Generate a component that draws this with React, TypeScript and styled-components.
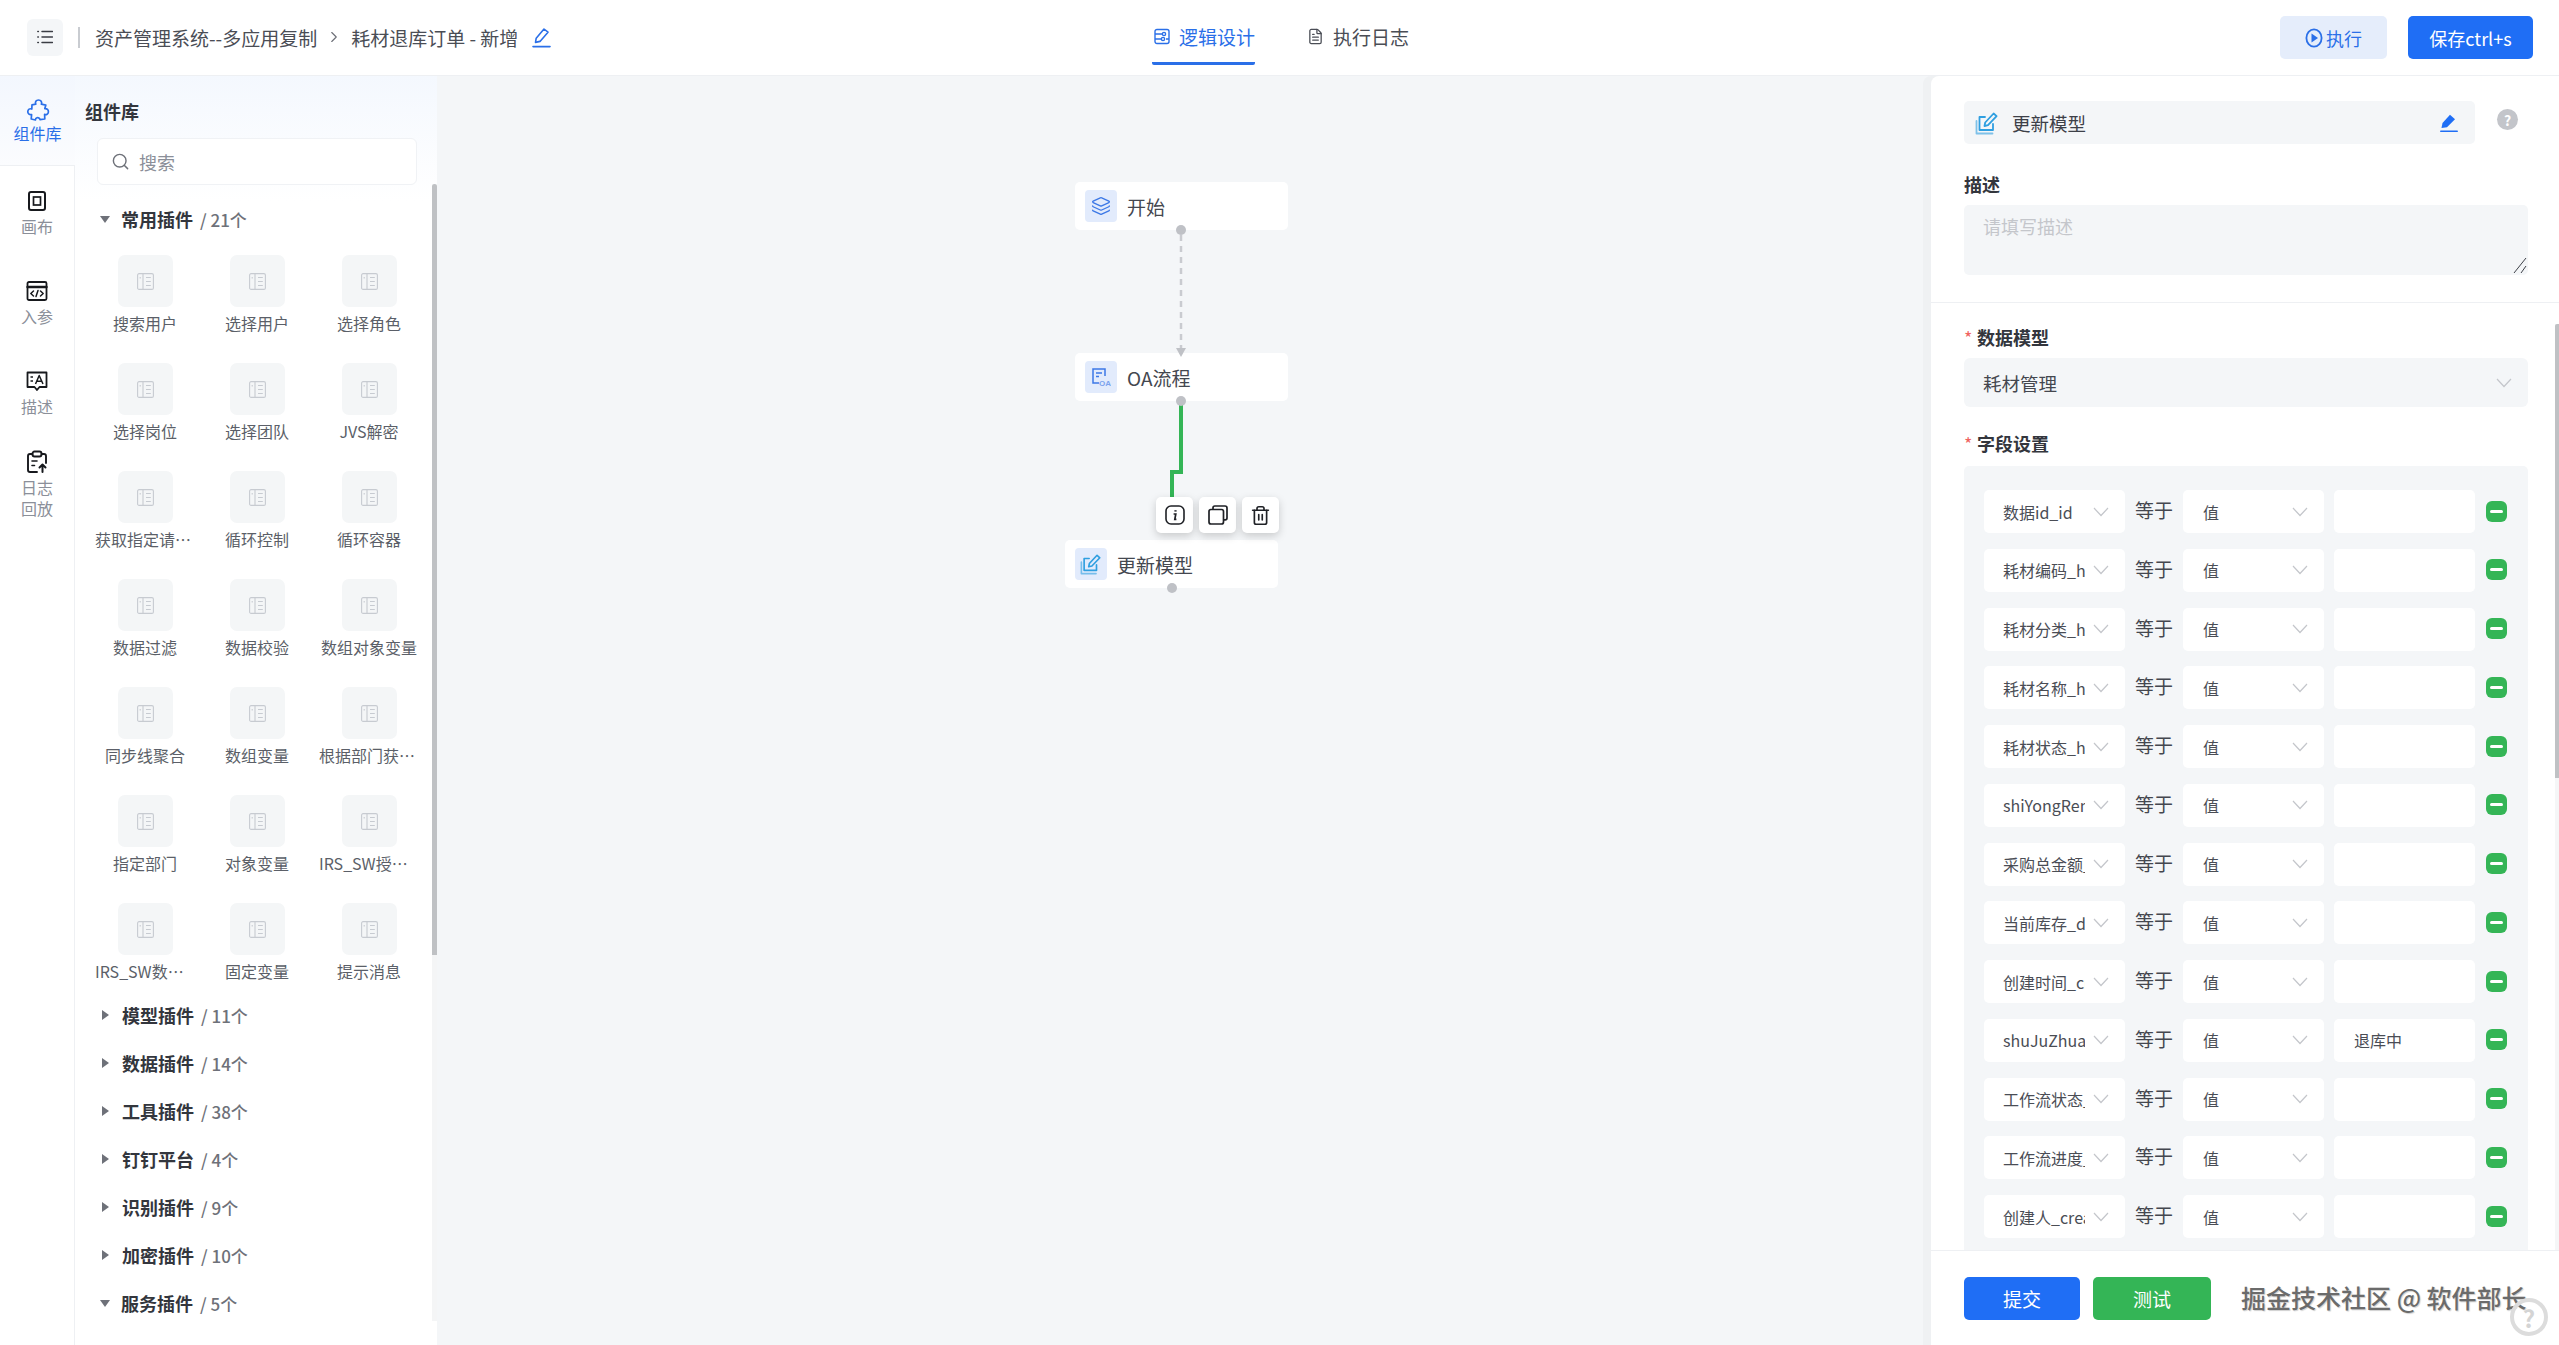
import styled, { createGlobalStyle } from "styled-components";
import { ChevronRight, Search, Layers, Trash2, FileText } from "lucide-react";

const GlobalStyle = createGlobalStyle`
  html, body {
    margin: 0;
    padding: 0;
    height: 100%;
    background: #fff;
  }
  body {
    font-family: "Noto Sans CJK SC", "Noto Sans", sans-serif;
    color: #3d4048;
    overflow: hidden;
  }
  * { box-sizing: border-box; }
`;

const Page = styled.div`
  width: 2559px;
  height: 1345px;
  display: flex;
  flex-direction: column;
  overflow: hidden;
`;

const Header = styled.header`
  height: 76px;
  flex: none;
  display: flex;
  align-items: center;
  justify-content: space-between;
  position: relative;
  padding: 0 26px 1px 27px;
  border-bottom: 1px solid #eef0f3;
  background: #fff;
`;

const HeaderLeft = styled.div`
  display: flex;
  align-items: center;
  font-size: 19px;
`;

const MenuButton = styled.div`
  width: 36px;
  height: 37px;
  border-radius: 6px;
  background: #f4f6f8;
  display: flex;
  align-items: center;
  justify-content: center;
  margin-right: 15px;
`;

const Divider = styled.div`
  width: 2px;
  height: 21px;
  background: #c9ccd1;
  margin-right: 15px;
`;

const Crumb = styled.span`
  color: #4a4d55;
  white-space: nowrap;
`;

const CrumbSep = styled(ChevronRight)`
  margin: 0 8px 0 8px;
  color: #6b6e76;
`;

const CrumbEdit = styled.span`
  display: flex;
  margin-left: 14px;
`;

const Tabs = styled.div`
  position: absolute;
  left: 1152px;
  top: 0;
  height: 75px;
  display: flex;
  gap: 50px;
`;

const Tab = styled.div<{ $active?: boolean }>`
  height: 65px;
  display: flex;
  align-items: center;
  gap: 9px;
  padding: 10px 0 0 2px;
  font-size: 19px;
  color: ${(p) => (p.$active ? "#2a6fe8" : "#4a4d55")};
  border-bottom: 3px solid ${(p) => (p.$active ? "#2a6fe8" : "transparent")};
  border-radius: 0 0 2px 2px;
`;

const HeaderActions = styled.div`
  display: flex;
  gap: 21px;
`;

const HeaderButton = styled.button<{ $primary?: boolean }>`
  height: 43px;
  width: ${(p) => (p.$primary ? "125px" : "107px")};
  margin-top: 1px;
  border: none;
  border-radius: 5px;
  font: inherit;
  font-size: 18px;
  display: flex;
  align-items: center;
  justify-content: center;
  gap: 3px;
  color: ${(p) => (p.$primary ? "#fff" : "#2a6fe8")};
  background: ${(p) => (p.$primary ? "#1f6ef5" : "#e5edfb")};
`;

const Body = styled.div`
  flex: 1;
  min-height: 0;
  display: flex;
  background: #f4f6f8;
`;

const Rail = styled.nav`
  width: 75px;
  flex: none;
  background: #fff;
  border-right: 1px solid #eef0f3;
  display: flex;
  flex-direction: column;
  align-items: stretch;
`;

const RailActive = styled.div`
  height: 90px;
  margin-right: -1px;
  padding-top: 22px;
  display: flex;
  flex-direction: column;
  align-items: center;
  background: linear-gradient(#f3f7fe, #fbfcfe);
  border-bottom: 1px solid #eef0f3;
  color: #2a6fe8;
  font-size: 16px;
  line-height: 22px;
`;

const RailList = styled.div`
  padding-top: 23px;
  display: flex;
  flex-direction: column;
  gap: 42px;
`;

const RailItem = styled.div<{ $tight?: boolean }>`
  display: flex;
  flex-direction: column;
  align-items: center;
  text-align: center;
  color: #8b8f99;
  font-size: 16px;
  line-height: 21px;
  width: 74px;
  margin-top: ${(p) => (p.$tight ? "-9px" : "0")};

  svg { margin-bottom: 3px; color: #17191d; }
`;

const Panel = styled.aside`
  width: 362px;
  flex: none;
  position: relative;
  background: linear-gradient(#f4f8fe, #fff 125px);
  padding: 22px 0 0 10px;
  overflow: hidden;
`;

const PanelTitle = styled.div`
  font-size: 18px;
  font-weight: 700;
  line-height: 26px;
  color: #33363d;
`;

const SearchBox = styled.div`
  width: 320px;
  height: 47px;
  margin: 14px 0 0 12px;
  border: 1px solid #f0f2f5;
  border-radius: 6px;
  background: #fff;
  display: flex;
  align-items: center;
  gap: 9px;
  padding-left: 13px;
  font-size: 18px;
  color: #8b8f99;
`;

const ScrollThumb = styled.div`
  position: absolute;
  right: 0;
  top: 108px;
  width: 5px;
  height: 771px;
  border-radius: 3px 3px 0 0;
  background: #bfc1c4;
`;

const ScrollTrack = styled.div`
  position: absolute;
  right: 0;
  top: 108px;
  bottom: 24px;
  width: 5px;
  background: #f4f5f6;
`;

const GroupHeader = styled.div`
  height: 48px;
  display: flex;
  align-items: center;
  padding-left: 15px;
  font-size: 18px;
`;

const FirstGroup = styled(GroupHeader)`
  margin-top: 10px;
`;

const Caret = styled.span<{ $open?: boolean }>`
  width: 0;
  height: 0;
  margin-right: ${(p) => (p.$open ? "11px" : "13px")};
  margin-left: ${(p) => (p.$open ? "0" : "2px")};
  border-style: solid;
  ${(p) =>
    p.$open
      ? "border-width: 7px 5px 0 5px; border-color: #6e7179 transparent transparent transparent;"
      : "border-width: 5px 0 5px 7px; border-color: transparent transparent transparent #6e7179;"}
`;

const GroupName = styled.span`
  font-weight: 700;
  color: #33363d;
`;

const GroupCount = styled.span`
  margin-left: 7px;
  color: #6e7179;
  font-weight: 500;
  font-size: 17px;
`;

const Tiles = styled.div`
  width: 336px;
  margin: 12px 0 0 4px;
  display: grid;
  grid-template-columns: repeat(3, 112px);
  grid-auto-rows: 108px;
`;

const Tile = styled.div`
  display: flex;
  flex-direction: column;
  align-items: center;
  min-width: 0;
`;

const TileIcon = styled.div`
  width: 55px;
  height: 52px;
  border-radius: 7px;
  background: #f4f6f7;
  display: flex;
  align-items: center;
  justify-content: center;
`;

const TileLabel = styled.div<{ $wide?: boolean }>`
  width: 100%;
  padding: 0 ${(p) => (p.$wide ? "0" : "6px")};
  margin-top: 4px;
  text-align: center;
  font-size: 16px;
  line-height: 24px;
  color: #5b5f68;
  white-space: nowrap;
  overflow: hidden;
  text-overflow: ellipsis;
`;

const GroupStack = styled.div`
  margin-top: -20px;
`;

const Canvas = styled.main`
  flex: 1;
  position: relative;
  min-width: 0;
`;

const Node = styled.div<{ $x: number; $y: number }>`
  position: absolute;
  left: ${(p) => p.$x}px;
  top: ${(p) => p.$y}px;
  width: 213px;
  height: 48px;
  border-radius: 5px;
  background: #fff;
  display: flex;
  align-items: center;
  gap: 10px;
  padding-left: 10px;
  font-size: 19px;
  color: #44474f;
`;

const NodeIcon = styled.div`
  width: 32px;
  height: 32px;
  border-radius: 4px;
  background: #e2ebfc;
  display: flex;
  align-items: center;
  justify-content: center;
`;

const Links = styled.svg`
  position: absolute;
  left: 0;
  top: 0;
  width: 900px;
  height: 600px;
  pointer-events: none;
`;

const NodeActions = styled.div`
  position: absolute;
  left: 719px;
  top: 421px;
  display: flex;
  gap: 6px;
`;

const ActionButton = styled.div`
  width: 37px;
  height: 36px;
  border-radius: 5px;
  background: #fff;
  box-shadow: 0 3px 8px rgba(0, 0, 0, 0.18);
  display: flex;
  align-items: center;
  justify-content: center;
  color: #1f2126;
`;

const Inspector = styled.section`
  width: 628px;
  flex: none;
  position: relative;
  background: #fff;
  border-radius: 8px 0 0 0;
  box-shadow: -8px 0 0 #eff1f3;
  display: flex;
  flex-direction: column;
  overflow: hidden;
`;

const InspectorTop = styled.div`
  height: 227px;
  flex: none;
  padding: 25px 31px 0 33px;
  border-bottom: 1px solid #eef0f3;
`;

const TitleRow = styled.div`
  display: flex;
  align-items: center;
  gap: 22px;
`;

const TitleBar = styled.div`
  width: 511px;
  height: 43px;
  border-radius: 5px;
  background: #f4f6f8;
  display: flex;
  align-items: center;
  gap: 13px;
  padding: 0 17px 0 11px;
  font-size: 18.5px;
  color: #3d4048;
`;

const TitleText = styled.span`
  flex: 1;
`;

const HelpDot = styled.div`
  width: 21px;
  height: 21px;
  margin-top: -6px;
  border-radius: 50%;
  background: #c3c5ca;
  color: #fff;
  font-size: 14px;
  font-weight: 700;
  display: flex;
  align-items: center;
  justify-content: center;
`;

const Label = styled.div`
  font-size: 18px;
  font-weight: 700;
  line-height: 26px;
  color: #33363d;
  display: flex;
`;

const DescLabel = styled(Label)`
  margin-top: 27px;
`;

const TextArea = styled.div`
  position: relative;
  width: 564px;
  height: 70px;
  margin-top: 8px;
  border-radius: 5px;
  background: #f4f6f8;
  padding: 7px 19px;
  font-size: 18px;
  line-height: 28px;
  color: #c4c6cb;
`;

const ResizeMark = styled.svg`
  position: absolute;
  right: 1px;
  bottom: 1px;
`;

const Form = styled.div`
  flex: 1;
  min-height: 0;
  padding: 21px 31px 0 33px;
  overflow: hidden;
  position: relative;
`;

const Star = styled.span`
  color: #f0645f;
  width: 13px;
  font-weight: 400;
`;

const ModelSelect = styled.div`
  width: 564px;
  height: 49px;
  margin: 8px 0 23px;
  border-radius: 6px;
  background: #f4f6f8;
  display: flex;
  align-items: center;
  justify-content: space-between;
  padding: 0 16px 0 19px;
  font-size: 18.5px;
  color: #44474f;
`;

const FieldGroup = styled.div`
  width: 564px;
  margin-top: 10px;
  padding: 24px 21px 40px 20px;
  border-radius: 5px;
  background: #f4f6f8;
  display: flex;
  flex-direction: column;
  gap: 15.75px;
`;

const FieldRow = styled.div`
  height: 43px;
  flex: none;
  display: flex;
  align-items: center;
`;

const FieldSelect = styled.div`
  width: 141px;
  height: 43px;
  flex: none;
  border-radius: 5px;
  background: #fff;
  display: flex;
  align-items: center;
  padding-left: 19px;
  font-size: 16px;
  color: #4a4d55;
`;

const FieldText = styled.span`
  width: 82px;
  margin-right: 8px;
  overflow: hidden;
  white-space: nowrap;
`;

const ValueText = styled(FieldText)`
  width: 82px;
  padding-left: 1px;
`;

const Chevron = styled.svg`
  flex: none;
`;

const Op = styled.div`
  width: 58px;
  flex: none;
  text-align: center;
  font-size: 19px;
  margin-top: -4px;
  color: #44474f;
`;

const ValueInput = styled.div`
  width: 141px;
  height: 43px;
  flex: none;
  margin-left: 10px;
  border-radius: 5px;
  background: #fff;
  display: flex;
  align-items: center;
  padding-left: 20px;
  font-size: 16px;
  color: #4a4d55;
`;

const MinusButton = styled.div`
  width: 21px;
  height: 21px;
  flex: none;
  margin: -1px 0 0 11px;
  border-radius: 6px;
  background: #34b556;
  display: flex;
  align-items: center;
  justify-content: center;

  &::before {
    content: "";
    width: 13px;
    height: 3px;
    border-radius: 1.5px;
    background: #fff;
  }
`;

const InspectorTrack = styled.div`
  position: absolute;
  right: 0;
  top: 248px;
  bottom: 95px;
  width: 4px;
  background: #f5f6f7;
`;

const InspectorThumb = styled.div`
  position: absolute;
  right: 0;
  top: 248px;
  width: 4px;
  height: 454px;
  border-radius: 2px 0 0 0;
  background: #bfc1c4;
`;

const Footer = styled.div`
  height: 95px;
  flex: none;
  position: relative;
  background: #fff;
  border-top: 1px solid #eef0f3;
  padding: 26px 0 0 33px;
  display: flex;
  gap: 13px;
`;

const FooterButton = styled.button<{ $green?: boolean }>`
  width: ${(p) => (p.$green ? "118px" : "116px")};
  height: 43px;
  border: none;
  border-radius: 5px;
  font: inherit;
  font-size: 19px;
  color: #fff;
  background: ${(p) => (p.$green ? "#34b556" : "#1f6ef5")};
`;

const Watermark = styled.div`
  position: absolute;
  left: 310px;
  top: 27px;
  font-size: 25px;
  font-weight: 500;
  line-height: 38px;
  color: #6b6b6b;
  white-space: nowrap;
  text-shadow: 1px 1px 1px #d0d0d0;
`;

const WatermarkHelp = styled.div`
  position: absolute;
  left: 579px;
  top: 47px;
  width: 38px;
  height: 38px;
  border-radius: 50%;
  border: 4px solid #dcdcdc;
  color: #d4d4d4;
  font-size: 24px;
  font-weight: 700;
  display: flex;
  align-items: center;
  justify-content: center;
`;

const PencilIcon = () => (
  <svg width="19" height="21" viewBox="0 0 19 21" fill="none" stroke="#2a6fe8" strokeWidth="1.6" strokeLinejoin="round" strokeLinecap="round">
    <path d="M3.5 15.4 L4.2 11.2 L12 2 L16 5.2 L8 14.4 Z" />
    <path d="M1 19.6 H18" />
  </svg>
);

const SolidPencil = () => (
  <svg width="18" height="20" viewBox="0 0 18 20" fill="#1f6ef5">
    <path d="M1.5 15 L2.5 10 L10 1.8 L15 6.2 L7 14.2 Z" />
    <rect x="0" y="17.5" width="18" height="1.6" rx="0.8" />
  </svg>
);

const EditModelIcon = ({ size = 24 }: { size?: number }) => (
  <svg width={size} height={size} viewBox="0 0 24 24" fill="none" stroke="#2f9fe0" strokeWidth="1.8" strokeLinejoin="round" strokeLinecap="round">
    <path d="M10 6 H4.5 V19 H18 V13" />
    <path d="M1.5 10 V22.5 H17.5" opacity="0.6" />
    <path d="M9.5 15 L10.2 11.5 L18.6 2.5 L21.6 5.2 L13 14.2 Z" />
  </svg>
);

const MenuIcon = () => (
  <svg width="16" height="14" viewBox="0 0 16 14" fill="none" stroke="#3a3d44" strokeWidth="1.5" strokeLinecap="round">
    <path d="M5 1.5H15.5M5 7H15.5M5 12.5H15.5" />
    <path d="M0.8 1.5H1.4M0.8 7H1.4M0.8 12.5H1.4" />
  </svg>
);

const TileGlyph = () => (
  <svg width="17" height="17" viewBox="0 0 17 17" fill="none" stroke="#c7cbd1" strokeWidth="1.1">
    <rect x="0.6" y="0.6" width="15.8" height="15.8" rx="1.5" />
    <path d="M6 0.6V16.4M9 4.5H13.8M9 8.5H13.8M9 12.5H13.8M3.2 4V5.6" />
  </svg>
);

const PuzzleIcon = () => (
  <svg width="24" height="24" viewBox="0 0 24 24" fill="none" stroke="#2a6fe8" strokeWidth="1.7" strokeLinejoin="round">
    <path d="M12.5 2 C15 2 16.2 4 15.4 6.2 L19.8 7.2 L18.8 10.6 C21 10.4 22.6 12 22.4 14 C22.2 16 20.4 17.2 18.6 16.4 L18.8 21 L14 21.6 C13.6 20 12.4 19.4 11 19.8 C9.8 20.2 9.4 21 9.4 22 L5.2 21 L5.6 16.6 C3.2 17 1.6 15.4 1.8 13.4 C2 11.4 3.6 10.2 5.8 11 L6 6.8 L9.8 6.2 C8.8 4 10 2 12.5 2 Z" />
  </svg>
);

const CanvasIcon = () => (
  <svg width="20" height="24" viewBox="0 0 20 24" fill="none" stroke="#17191d" strokeWidth="2">
    <rect x="2" y="3" width="16" height="18" rx="2" />
    <rect x="6.5" y="8" width="7" height="8" strokeWidth="1.7" />
  </svg>
);

const ParamIcon = () => (
  <svg width="22" height="24" viewBox="0 0 22 24" fill="none" stroke="#17191d" strokeWidth="1.8" strokeLinecap="round" strokeLinejoin="round">
    <rect x="1.5" y="3" width="19" height="18" rx="1.5" />
    <path d="M1.5 8H20.5" strokeWidth="2.4" />
    <path d="M7.5 12L4.8 14.5L7.5 17M14.5 12L17.2 14.5L14.5 17M12 11.5L10 17.5" strokeWidth="1.5" />
  </svg>
);

const DescIcon = () => (
  <svg width="22" height="24" viewBox="0 0 22 24" fill="none" stroke="#17191d" strokeWidth="1.8" strokeLinejoin="round">
    <path d="M1.5 3.5H20.5V18H13.5L11 21L8.5 18H1.5Z" />
    <path d="M4.5 8H7M4.5 12H7" strokeWidth="1.5" />
    <path d="M9.5 15L13.2 6.5L17 15M11 12.3H15.5" strokeWidth="1.5" />
  </svg>
);

const LogIcon = () => (
  <svg width="22" height="24" viewBox="0 0 22 24" fill="none" stroke="#17191d" strokeWidth="1.9" strokeLinecap="round" strokeLinejoin="round">
    <path d="M6.5 4H4C2.8 4 2 4.8 2 6V20C2 21.2 2.8 22 4 22H11" />
    <path d="M15.5 4H18C19.2 4 20 4.8 20 6V13" />
    <rect x="6.5" y="1.5" width="9" height="5" rx="2" />
    <path d="M6 11H11M6 15.5H8.5" strokeWidth="1.6" />
    <path d="M16.5 22V14.5M13.5 17.5L16.5 14.5L19.5 17.5" strokeWidth="2" />
  </svg>
);

const OaIcon = () => (
  <svg width="20" height="20" viewBox="0 0 20 20" fill="none" stroke="#3c78e6" strokeWidth="1.5">
    <path d="M8 16H2V2H14V9" />
    <path d="M5 6H11M5 9.5H8" />
    <text x="8" y="18.5" fontSize="8" fill="#7aa3ee" stroke="none" fontWeight="700" fontFamily="Liberation Sans, sans-serif">OA</text>
  </svg>
);

const InfoIcon = () => (
  <svg width="20" height="20" viewBox="0 0 20 20" fill="none" stroke="#1f2126" strokeWidth="1.6">
    <rect x="1" y="1" width="18" height="18" rx="5" />
    <path d="M10.5 5.2V6.6" strokeWidth="2.2" />
    <path d="M8.6 9H10.8L9.8 14.4H11.4" strokeWidth="1.7" />
  </svg>
);

const CopyIcon = () => (
  <svg width="20" height="20" viewBox="0 0 20 20" fill="none" stroke="#1f2126" strokeWidth="1.7" strokeLinejoin="round">
    <rect x="1" y="4.5" width="14.5" height="14.5" rx="2" />
    <path d="M5 4.5V2.8C5 1.8 5.8 1 6.8 1H17C18.1 1 19 1.9 19 3V13C19 14 18.2 14.8 17.2 14.8H15.5" />
  </svg>
);

const PlayIcon = () => (
  <svg width="18" height="20" viewBox="0 0 18 20" fill="none">
    <ellipse cx="9" cy="10" rx="7.6" ry="8.6" stroke="#2a6fe8" strokeWidth="1.8" />
    <path d="M6.5 5.5L13 10L6.5 14.5Z" fill="#2a6fe8" />
  </svg>
);

const SelectArrow = () => (
  <Chevron width="16" height="10" viewBox="0 0 16 10" fill="none" stroke="#c4c6cb" strokeWidth="1.2">
    <path d="M1 1L8 8.5L15 1" />
  </Chevron>
);

const tiles = [
  "搜索用户", "选择用户", "选择角色",
  "选择岗位", "选择团队", "JVS解密",
  "获取指定请求头", "循环控制", "循环容器",
  "数据过滤", "数据校验", "数组对象变量",
  "同步线聚合", "数组变量", "根据部门获取用户",
  "指定部门", "对象变量", "IRS_SW授权码",
  "IRS_SW数据共享", "固定变量", "提示消息",
];

const groups = [
  { name: "模型插件", count: "11个" },
  { name: "数据插件", count: "14个" },
  { name: "工具插件", count: "38个" },
  { name: "钉钉平台", count: "4个" },
  { name: "识别插件", count: "9个" },
  { name: "加密插件", count: "10个" },
  { name: "服务插件", count: "5个", open: true },
];

const fields = [
  { name: "数据id_id" },
  { name: "耗材编码_hao" },
  { name: "耗材分类_hao" },
  { name: "耗材名称_hao" },
  { name: "耗材状态_hao" },
  { name: "shiYongRen_shi" },
  { name: "采购总金额_cai" },
  { name: "当前库存_dang" },
  { name: "创建时间_create" },
  { name: "shuJuZhuangTai", value: "退库中" },
  { name: "工作流状态_flow" },
  { name: "工作流进度_flow" },
  { name: "创建人_createBy" },
  { name: "创建人部门" },
];

export default function App() {
  return (
    <Page>
      <GlobalStyle />
      <Header>
        <HeaderLeft>
          <MenuButton><MenuIcon /></MenuButton>
          <Divider />
          <Crumb>资产管理系统--多应用复制</Crumb>
          <CrumbSep size={18} strokeWidth={1.5} />
          <Crumb>耗材退库订单 - 新增</Crumb>
          <CrumbEdit><PencilIcon /></CrumbEdit>
        </HeaderLeft>
        <Tabs>
          <Tab $active>
            <svg width="16" height="17" viewBox="0 0 16 17" fill="none" stroke="#2a6fe8" strokeWidth="1.4">
              <rect x="1" y="1.5" width="14" height="14" rx="2" />
              <path d="M1 6H8M12 11H15M1 11H7" />
              <circle cx="10" cy="6" r="1.6" />
              <circle cx="9" cy="11" r="1.6" />
            </svg>
            逻辑设计
          </Tab>
          <Tab>
            <FileText size={17} strokeWidth={1.8} />
            执行日志
          </Tab>
        </Tabs>
        <HeaderActions>
          <HeaderButton><PlayIcon />执行</HeaderButton>
          <HeaderButton $primary>保存ctrl+s</HeaderButton>
        </HeaderActions>
      </Header>
      <Body>
        <Rail>
          <RailActive>
            <PuzzleIcon />
            组件库
          </RailActive>
          <RailList>
            <RailItem><CanvasIcon />画布</RailItem>
            <RailItem><ParamIcon />入参</RailItem>
            <RailItem><DescIcon />描述</RailItem>
            <RailItem $tight><LogIcon />日志<br />回放</RailItem>
          </RailList>
        </Rail>
        <Panel>
          <ScrollTrack />
          <ScrollThumb />
          <PanelTitle>组件库</PanelTitle>
          <SearchBox>
            <Search size={19} strokeWidth={1.8} color="#6e7179" />
            搜索
          </SearchBox>
          <FirstGroup>
            <Caret $open />
            <GroupName>常用插件</GroupName>
            <GroupCount>/ 21个</GroupCount>
          </FirstGroup>
          <Tiles>
            {tiles.map((t) => (
              <Tile key={t}>
                <TileIcon><TileGlyph /></TileIcon>
                <TileLabel $wide={t === "数组对象变量"}>{t}</TileLabel>
              </Tile>
            ))}
          </Tiles>
          <GroupStack>
            {groups.map((g) => (
              <GroupHeader key={g.name}>
                <Caret $open={g.open} />
                <GroupName>{g.name}</GroupName>
                <GroupCount>/ {g.count}</GroupCount>
              </GroupHeader>
            ))}
          </GroupStack>
        </Panel>
        <Canvas>
          <Links viewBox="0 0 900 600">
            <path d="M744 159V272" stroke="#c9cbd0" strokeWidth="2.5" strokeDasharray="6 5" fill="none" />
            <path d="M744 329V396H735V425" stroke="#34b556" strokeWidth="4" fill="none" />
          </Links>
          <Node $x={638} $y={106}>
            <NodeIcon><Layers size={20} color="#3c78e6" strokeWidth={1.6} /></NodeIcon>
            开始
          </Node>
          <Node $x={638} $y={277}>
            <NodeIcon><OaIcon /></NodeIcon>
            OA流程
          </Node>
          <Node $x={628} $y={464}>
            <NodeIcon><EditModelIcon size={22} /></NodeIcon>
            更新模型
          </Node>
          <Links viewBox="0 0 900 600">
            <path d="M739 272H749L744 281Z" fill="#bfc1c6" />
            <circle cx="744" cy="154" r="5" fill="#bfc1c6" />
            <circle cx="744" cy="325" r="5" fill="#bfc1c6" />
            <circle cx="735" cy="512" r="5" fill="#bfc1c6" />
          </Links>
          <NodeActions>
            <ActionButton><InfoIcon /></ActionButton>
            <ActionButton><CopyIcon /></ActionButton>
            <ActionButton><Trash2 size={21} strokeWidth={1.9} /></ActionButton>
          </NodeActions>
        </Canvas>
        <Inspector>
          <InspectorTop>
            <TitleRow>
              <TitleBar>
                <EditModelIcon />
                <TitleText>更新模型</TitleText>
                <SolidPencil />
              </TitleBar>
              <HelpDot>?</HelpDot>
            </TitleRow>
            <DescLabel>描述</DescLabel>
            <TextArea>
              请填写描述
              <ResizeMark width="14" height="18" viewBox="0 0 14 18" fill="none" stroke="#3d4048" strokeWidth="1">
                <path d="M1 17L13 2M8 17L13 10" />
              </ResizeMark>
            </TextArea>
          </InspectorTop>
          <Form>
            <Label><Star>*</Star>数据模型</Label>
            <ModelSelect>
              耗材管理
              <SelectArrow />
            </ModelSelect>
            <Label><Star>*</Star>字段设置</Label>
            <FieldGroup>
              {fields.map((f) => (
                <FieldRow key={f.name}>
                  <FieldSelect>
                    <FieldText>{f.name}</FieldText>
                    <SelectArrow />
                  </FieldSelect>
                  <Op>等于</Op>
                  <FieldSelect>
                    <ValueText>值</ValueText>
                    <SelectArrow />
                  </FieldSelect>
                  <ValueInput>{f.value}</ValueInput>
                  <MinusButton />
                </FieldRow>
              ))}
            </FieldGroup>
          </Form>
          <InspectorTrack />
          <InspectorThumb />
          <Footer>
            <FooterButton>提交</FooterButton>
            <FooterButton $green>测试</FooterButton>
            <Watermark>掘金技术社区 @ 软件部长</Watermark>
            <WatermarkHelp>?</WatermarkHelp>
          </Footer>
        </Inspector>
      </Body>
    </Page>
  );
}
